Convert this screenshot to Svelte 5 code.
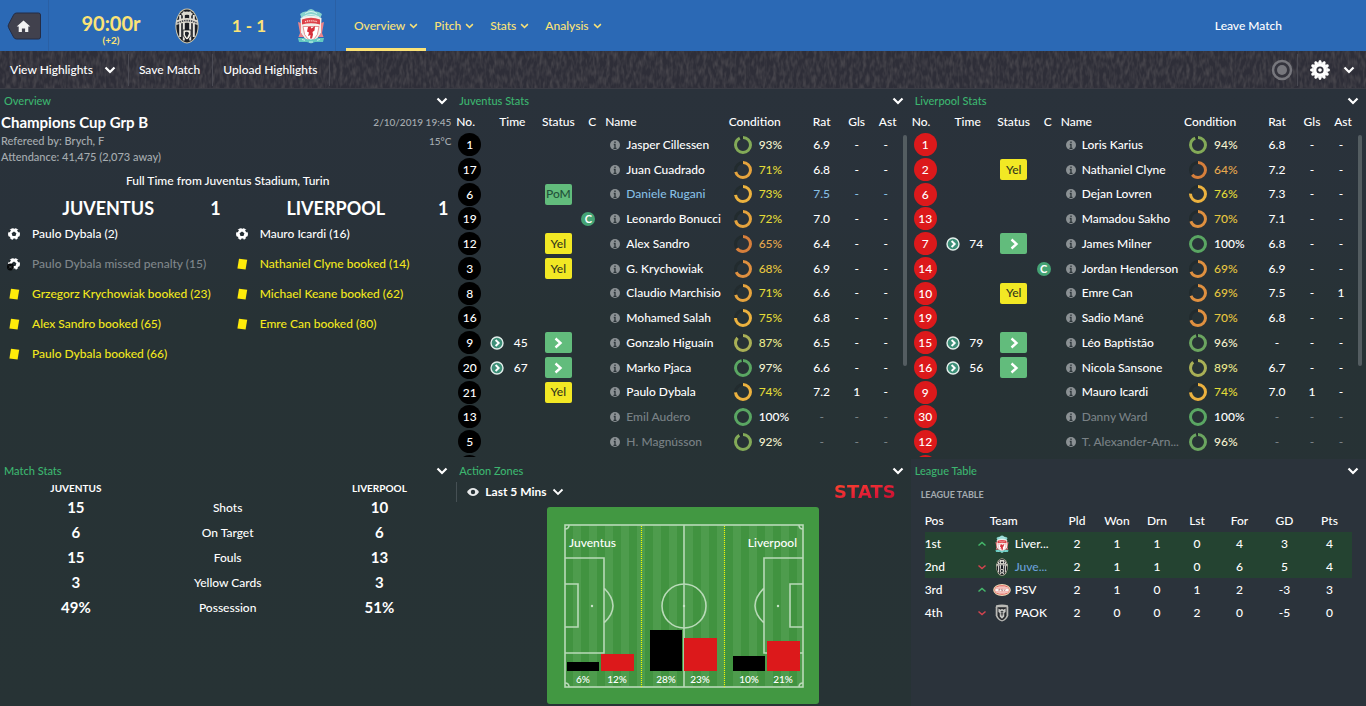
<script>
  const P = (no, name, cond, rat, extra = {}) => ({ no, name, cond, rat, gls: '-', ast: '-', ...extra });

  const juventus = [
    P(1, 'Jasper Cillessen', 93, '6.9'),
    P(17, 'Juan Cuadrado', 71, '6.8'),
    P(6, 'Daniele Rugani', 73, '7.5', { status: 'PoM', best: true }),
    P(19, 'Leonardo Bonucci', 72, '7.0', { captain: true }),
    P(12, 'Alex Sandro', 65, '6.4', { status: 'Yel' }),
    P(3, 'G. Krychowiak', 68, '6.9', { status: 'Yel' }),
    P(8, 'Claudio Marchisio', 71, '6.6'),
    P(16, 'Mohamed Salah', 75, '6.8'),
    P(9, 'Gonzalo Higuaín', 87, '6.5', { time: 45, status: 'sub' }),
    P(20, 'Marko Pjaca', 97, '6.6', { time: 67, status: 'sub' }),
    P(21, 'Paulo Dybala', 74, '7.2', { status: 'Yel', gls: '1' }),
    P(13, 'Emil Audero', 100, '-', { unused: true }),
    P(5, 'H. Magnússon', 92, '-', { unused: true })
  ];

  const liverpool = [
    P(1, 'Loris Karius', 94, '6.8'),
    P(2, 'Nathaniel Clyne', 64, '7.2', { status: 'Yel' }),
    P(6, 'Dejan Lovren', 76, '7.3'),
    P(13, 'Mamadou Sakho', 70, '7.1'),
    P(7, 'James Milner', 100, '6.8', { time: 74, status: 'sub' }),
    P(14, 'Jordan Henderson', 69, '6.9', { captain: true }),
    P(10, 'Emre Can', 69, '7.5', { status: 'Yel', ast: '1' }),
    P(19, 'Sadio Mané', 70, '6.8'),
    P(15, 'Léo Baptistão', 96, '-', { time: 79, status: 'sub' }),
    P(16, 'Nicola Sansone', 89, '6.7', { time: 56, status: 'sub' }),
    P(9, 'Mauro Icardi', 74, '7.0', { gls: '1' }),
    P(30, 'Danny Ward', 100, '-', { unused: true }),
    P(12, 'T. Alexander-Arn...', 96, '-', { unused: true })
  ];

  const sides = [
    {
      name: 'JUVENTUS', score: 1,
      events: [
        ['goal', 'Paulo Dybala (2)'],
        ['miss', 'Paulo Dybala missed penalty (15)'],
        ['card', 'Grzegorz Krychowiak booked (23)'],
        ['card', 'Alex Sandro booked (65)'],
        ['card', 'Paulo Dybala booked (66)']
      ]
    },
    {
      name: 'LIVERPOOL', score: 1,
      events: [
        ['goal', 'Mauro Icardi (16)'],
        ['card', 'Nathaniel Clyne booked (14)'],
        ['card', 'Michael Keane booked (62)'],
        ['card', 'Emre Can booked (80)']
      ]
    }
  ];

  const matchStats = [
    ['15', 'Shots', '10'],
    ['6', 'On Target', '6'],
    ['15', 'Fouls', '13'],
    ['3', 'Yellow Cards', '3'],
    ['49%', 'Possession', '51%']
  ];

  const zones = [
    { x: 20, home: 6, away: 12 },
    { x: 103, home: 28, away: 23 },
    { x: 186, home: 10, away: 21 }
  ];

  const league = [
    { pos: '1st', up: true, crest: 'liv', team: 'Liver...', n: [2, 1, 1, 0, 4, 3, 4], q: true },
    { pos: '2nd', up: false, crest: 'juv', team: 'Juve...', n: [2, 1, 1, 0, 6, 5, 4], q: true, own: true },
    { pos: '3rd', up: true, crest: 'psv', team: 'PSV', n: [2, 1, 0, 1, 2, -3, 3] },
    { pos: '4th', up: false, crest: 'paok', team: 'PAOK', n: [2, 0, 0, 2, 0, -5, 0] }
  ];

  const barHeight = (v) => Math.round(v * 1.45);

  function ringColour(c) {
    if (c >= 97) return '#5aa663';
    if (c >= 96) return '#6ba560';
    if (c >= 90) return '#83aa58';
    if (c >= 85) return '#a9b056';
    if (c >= 73) return '#ecb23f';
    if (c >= 71) return '#e5a33e';
    if (c >= 68) return '#df9040';
    return '#d67f3c';
  }
  function textColour(c) {
    if (c >= 100) return '#ffffff';
    if (c >= 90) return '#f5f3cf';
    if (c >= 85) return '#eae98c';
    if (c >= 71) return '#e2db38';
    if (c >= 68) return '#e6c63f';
    return '#e5a84e';
  }
</script>

{#snippet caret(cls = '')}
  <svg class="caret {cls}" viewBox="0 0 12 8" aria-hidden="true"><path d="M1.5 1.5 6 6l4.5-4.5" /></svg>
{/snippet}

{#snippet heading(text)}
  <header class="panel-head">
    <h2>{text}</h2>
    <button aria-label="Panel options">{@render caret()}</button>
  </header>
{/snippet}

{#snippet crest(kind)}
  {#if kind === 'juv'}
    <svg class="crest" viewBox="0 0 26 36" aria-hidden="true">
      <ellipse cx="13" cy="18" rx="11.6" ry="17.4" fill="#cfc8ae" />
      <ellipse cx="13" cy="18" rx="10.6" ry="16.4" fill="#1b1d23" />
      <path d="M6.200 7V29M9.800 3.500V32.500M16.200 3.500V32.500M19.800 7V29" stroke="#e6e4de" stroke-width="2" />
      <path d="M2.200 12.500Q13 7.600 23.800 12.500V17Q13 12.400 2.200 17z" fill="#dedad0" />
      <path d="M3.500 14.900Q13 10.200 22.500 14.900" fill="none" stroke="#4a4c53" stroke-width="1.700" stroke-dasharray="1.500 .8" />
      <path d="M7 5.800Q13 1.400 19 5.800L17 8Q13 5.500 9 8z" fill="#dcd9d0" />
      <path d="M9 22h8v5q-1 3-4 5-3-2-4-5z" fill="#f1eee4" stroke="#15171c" stroke-width=".8" />
      <path d="M11 24.200c3-1.300 5 .6 3.500 2.500L13 30l-2-3z" fill="#20242b" />
    </svg>
  {:else if kind === 'liv'}
    <svg class="crest" viewBox="0 0 28 36" aria-hidden="true">
      <path d="M3 6q3-3 6.500-2.500Q14-1.500 18.500 3.500 22 3 25 6l-2 5H5z" fill="#86d2cd" />
      <path d="M8 5.500q6-4 12 0M6 9q8-5 16 0" fill="none" stroke="#d9f2ef" stroke-width="1" />
      <path d="M3.500 10Q14 5.500 24.500 10L24 25q-3 6-10 10Q7 31 4 25z" fill="#f3f0eb" />
      <path d="M5 11.500Q14 8 23 11.500v5Q14 14 5 16.500z" fill="#dd424a" />
      <path d="M8 13.600q6-1.600 12 0" fill="none" stroke="#ffd7d1" stroke-width="1.300" stroke-dasharray="1.200 .7" />
      <path d="M6 18.500h16l-1.600 8Q18 31 14 33q-4-2-6.400-6.500z" fill="#fff" stroke="#df7b7d" stroke-width=".8" />
      <path d="M11 19l2.500-.5 1 2L18 18l-.5 4.500-2 1.500.5 2.500-1 4h-2l.5-3.500-2.500 1 1-3.500-2-1z" fill="#d62f3a" />
      <path d="M1 14l3 1v10l3 4H1.500L3 25zM27 14l-3 1v10l-3 4h5.500L25 25z" fill="#ec858a" />
      <path d="M1 30h6q6 3 14 0h6l-1 4h-8l-4 1.500L10 34H2z" fill="#63c9c0" />
      <path d="M5 31.500l3 .8M23 31.500l-3 .8M12 34h4" stroke="#d9f5ef" stroke-width=".9" />
    </svg>
  {:else if kind === 'psv'}
    <svg class="crest" viewBox="0 0 20 14" aria-hidden="true">
      <ellipse cx="10" cy="7" rx="9.800" ry="6.800" fill="#ecd9b4" />
      <ellipse cx="10" cy="7" rx="8.500" ry="5.500" fill="#e2605a" />
      <path d="M3.500 4.200h13M3.500 9.800h13M6 2.800h8M6 11.200h8" stroke="#f9ebe6" stroke-width=".8" />
      <path d="M2.500 5.200h15v3.600h-15z" fill="#fbf6f2" />
      <path d="M6.500 7.900V6.200h1.300v.8H6.500M10.800 6.200H9.300v.8h1.500v.8H9.300M12 6l.9 1.900.9-1.900" fill="none" stroke="#a65a5a" stroke-width=".6" />
    </svg>
  {:else}
    <svg class="crest" viewBox="0 0 16 20" aria-hidden="true">
      <path d="M1.500 1.500Q8-.5 14.500 1.500l.5 2v9q-1 5-7 7-6-2-7-7v-9z" fill="#b9b9b5" />
      <path d="M3 3.500h10v9q-1 4-5 5.500-4-1.500-5-5.500z" fill="#26282c" />
      <path d="M4 5l2.500 1.500L8 5.200l1.500 1.300L12 5v4l-1.500 1v4L8 16.500 5.500 14v-4L4 9z" fill="#c9c9c6" />
      <path d="M6.500 8.500h3M8 7.500v6M6.500 11h3" stroke="#26282c" stroke-width=".9" />
    </svg>
  {/if}
{/snippet}

{#snippet squad(title, team, players)}
  <section class="panel">
    {@render heading(title)}
    <div class="scroller">
      <table class="squad {team}">
        <colgroup>
          <col class="w-no" /><col class="w-time" /><col class="w-status" /><col class="w-c" /><col />
          <col class="w-cond" /><col class="w-rat" /><col class="w-gls" /><col class="w-ast" />
        </colgroup>
        <thead>
          <tr>
            <th class="left">No.</th><th>Time</th><th>Status</th><th>C</th>
            <th class="left">Name</th><th class="left">Condition</th><th>Rat</th><th>Gls</th><th>Ast</th>
          </tr>
        </thead>
        <tbody>
          {#each players as p}
            <tr class:best={p.best} class:unused={p.unused}>
              <td class="left"><span class="shirt">{p.no}</span></td>
              <td>
                {#if p.time}
                  <span class="time">
                    <svg viewBox="0 0 14 14" aria-hidden="true"><circle cx="7" cy="7" r="6" fill="#3d8f78" stroke="#e3efeb" stroke-width="1.400" /><path d="M5.600 4 8.700 7l-3.100 3" fill="none" stroke="#fff" stroke-width="1.900" /></svg>
                    <span>{p.time}</span>
                  </span>
                {/if}
              </td>
              <td>
                {#if p.status === 'sub'}
                  <span class="tag green"><svg viewBox="0 0 10 12" aria-label="Substituted"><path d="M2.500 1.500 7.500 6l-5 4.500" fill="none" stroke="#fff" stroke-width="2.400" /></svg></span>
                {:else if p.status}
                  <span class="tag" class:green={p.status === 'PoM'} class:yellow={p.status === 'Yel'}>{p.status}</span>
                {/if}
              </td>
              <td class="left">{#if p.captain}<span class="captain">C</span>{/if}</td>
              <td class="left">
                <span class="name">
                  <svg viewBox="0 0 10 10" aria-hidden="true"><circle cx="5" cy="5" r="5" fill="#8b9194" /><path d="M5 1.500v1.600M3.800 4.500H5v4M3.500 8.300h3" fill="none" stroke="#2b3438" stroke-width="1.300" /></svg>
                  <span>{p.name}</span>
                </span>
              </td>
              <td class="left">
                <span class="cond" style:color={textColour(p.cond)}>
                  <svg viewBox="0 0 20 20" aria-hidden="true">
                    <circle cx="10" cy="10" r="7.500" stroke="#222b2e" />
                    <circle cx="10" cy="10" r="7.500" pathLength="100" stroke={ringColour(p.cond)} stroke-dasharray="{p.cond} 100" transform="rotate(-90 10 10)" />
                  </svg>
                  {p.cond}%
                </span>
              </td>
              <td class="num">{p.rat}</td><td class="num">{p.gls}</td><td class="num">{p.ast}</td>
            </tr>
          {/each}
          <tr><td class="left"><span class="shirt"></span></td><td colspan="8"></td></tr>
        </tbody>
      </table>
      <div class="track"><div class="thumb"></div></div>
    </div>
  </section>
{/snippet}

<div class="app">
  <header class="top">
    <button class="home" aria-label="Home">
      <svg viewBox="0 0 34 28" aria-hidden="true">
        <path d="M9 1h22q2 0 2 2v22q0 2-2 2H9q-2 0-3-2L1 15.500q-.7-1.500 0-3L6 3q1-2 3-2z" fill="#41414d" stroke="#242c45" />
        <path d="M16 8.500 22.800 14.600h-2V20h-3.200v-3.600h-3.200V20h-3.200v-5.400h-2z" fill="#f2f2f3" />
      </svg>
    </button>
    <div class="scoreline">
      <div class="clock"><strong>90:00r</strong><span>(+2)</span></div>
      {@render crest('juv')}
      <strong>1 - 1</strong>
      {@render crest('liv')}
    </div>
    <nav>
      {#each ['Overview', 'Pitch', 'Stats', 'Analysis'] as item, i}
        <button class:active={i === 0}>{item}{@render caret('small')}</button>
      {/each}
    </nav>
    <button class="leave">Leave Match</button>
  </header>

  <div class="toolbar">
    <svg class="crowd" aria-hidden="true">
      <filter id="crowd" x="0" y="0" width="100%" height="100%" color-interpolation-filters="sRGB">
        <feTurbulence type="fractalNoise" baseFrequency=".3 .12" numOctaves="2" seed="4" />
        <feColorMatrix values="0 0 0 0 .32  0 0 0 0 .31  0 0 0 0 .33  1.600 0 0 0 -.6" />
      </filter>
      <rect width="100%" height="100%" filter="url(#crowd)" />
    </svg>
    <button class="wide">View Highlights {@render caret()}</button>
    <button>Save Match</button>
    <button>Upload Highlights</button>
    <span class="spacer"></span>
    <button class="record" aria-label="Record">
      <svg viewBox="0 0 22 22" aria-hidden="true"><circle cx="11" cy="11" r="9" fill="#34343d" stroke="#77777d" stroke-width="2.500" /><circle cx="11" cy="11" r="5" fill="#77777d" /></svg>
    </button>
    <button class="gear" aria-label="Settings">
      <svg viewBox="-11 -11 22 22" aria-hidden="true">
        {#each Array(12) as _, i}<path d="M-2.200-6.500-.9-9.800H.9L2.200-6.500z" fill="#fff" transform="rotate({i * 30})" />{/each}
        <circle r="7" fill="#fff" /><circle r="2.700" fill="none" stroke="#33333d" stroke-width="1.800" />
      </svg>
      {@render caret()}
    </button>
  </div>

  <main>
    <section class="panel">
      {@render heading('Overview')}
      <div class="match">
        <h1>Champions Cup Grp B</h1><span>2/10/2019 19:45</span>
        <span>Refereed by: Brych, F</span><span>15°C</span>
        <span>Attendance: 41,475 (2,073 away)</span>
      </div>
      <p class="venue">Full Time from Juventus Stadium, Turin</p>
      <div class="sides">
        {#each sides as side}
          <div>
            <div class="side-head"><span>{side.name}</span><b>{side.score}</b></div>
            <ul>
              {#each side.events as [kind, text]}
                <li class={kind}>
                  <svg viewBox="0 0 14 14" aria-hidden="true">
                    {#if kind === 'card'}
                      <path d="M4 1.800 12.200 2.800 10.600 12.600 2.400 11.400z" fill="#ffeb0a" />
                    {:else}
                      <circle cx="7" cy="7" r="6" fill="#fff" />
                      <path d="M7 4.600 9.400 6.300 8.500 9H5.500L4.600 6.300zM1.600 2.600l2.400.6L2.800 5.200 1 5.200zM12.400 2.600l-2.400.6 1.200 2 1.800 0zM5.700 13.200l.8-1.600h1.700l.8 1.600zM5.800.8h2.600L7.200 2zM1 9.500l2 .2.6 2.300-1.300-.5zM13 9.500l-2 .2-.6 2.300 1.300-.5z" fill="#263035" />
                      {#if kind === 'miss'}<circle cx="3.400" cy="10" r="3.400" fill="#050708" /><path d="M2 8.600l2.800 2.800m0-2.800L2 11.400" stroke="#4b5052" stroke-width=".8" />{/if}
                    {/if}
                  </svg>
                  <span>{text}</span>
                </li>
              {/each}
            </ul>
          </div>
        {/each}
      </div>
    </section>

    {@render squad('Juventus Stats', 'black', juventus)}
    {@render squad('Liverpool Stats', 'red', liverpool)}

    <section class="panel">
      {@render heading('Match Stats')}
      <table class="compare">
        <thead><tr><th>JUVENTUS</th><td></td><th>LIVERPOOL</th></tr></thead>
        <tbody>
          {#each matchStats as [home, label, away]}
            <tr><td><b>{home}</b></td><th>{label}</th><td><b>{away}</b></td></tr>
          {/each}
        </tbody>
      </table>
    </section>

    <section class="panel">
      {@render heading('Action Zones')}
      <div class="zone-bar">
        <label class="period">
          <svg viewBox="0 0 14 10" aria-hidden="true"><path d="M1 5q2.500-4 6-4t6 4q-2.500 4-6 4T1 5z" fill="#e8eaeb" /><circle cx="7" cy="5" r="2.200" fill="#273236" /></svg>
          <select aria-label="Period"><option>Last 5 Mins</option></select>
          {@render caret()}
        </label>
        <span class="stats-logo">STATS</span>
      </div>
      <svg class="pitch" viewBox="0 0 272 197" role="img" aria-label="Action zones">
        <defs>
          <pattern id="grass" x="18" width="16" height="20" patternUnits="userSpaceOnUse"><rect width="8" height="20" fill="#419340" /><rect x="8" width="8" height="20" fill="#4e9c4d" /></pattern>
        </defs>
        <rect width="272" height="197" rx="3" fill="#429842" />
        <rect x="18" y="18" width="238" height="162" fill="url(#grass)" />
        <g fill="none" stroke="#b9dab8" stroke-width="1.600">
          <rect x="18" y="18" width="238" height="162" />
          <path d="M137 18v162M18 51h39v95H18M18 77h13v43H18M256 51h-39v95h39M256 77h-13v43h13M57 81q18 18 0 35M217 81q-18 18 0 35" />
          <path d="M22 18q0 4-4 4M252 18q0 4 4 4M22 180q0-4-4-4M252 180q0-4 4-4" />
          <circle cx="137" cy="99" r="22" />
        </g>
        <g fill="#c9e2c8"><circle cx="45" cy="99" r="1.200" /><circle cx="137" cy="99" r="1.200" /><circle cx="231" cy="99" r="1.200" /></g>
        <path d="M94.500 19v161M177.500 19v161" stroke="#f4f800" stroke-width="1.100" stroke-dasharray="1 1" />
        <text x="22" y="40" class="club">Juventus</text>
        <text x="250" y="40" class="club" text-anchor="end">Liverpool</text>
        {#each zones as z}
          <rect x={z.x} y={164 - barHeight(z.home)} width="32" height={barHeight(z.home)} fill="#000" />
          <rect x={z.x + 34} y={164 - barHeight(z.away)} width="33" height={barHeight(z.away)} fill="#dc191b" />
          <text x={z.x + 16} y="176" text-anchor="middle">{z.home}%</text>
          <text x={z.x + 50} y="176" text-anchor="middle">{z.away}%</text>
        {/each}
      </svg>
    </section>

    <section class="panel league-panel">
      {@render heading('League Table')}
      <h3>LEAGUE TABLE</h3>
      <table class="league">
        <colgroup><col class="l-pos" /><col class="l-move" /><col /><col span="4" class="l-num" /><col span="3" class="l-wide" /></colgroup>
        <thead>
          <tr><th class="left">Pos</th><th></th><th class="left">Team</th><th>Pld</th><th>Won</th><th>Drn</th><th>Lst</th><th>For</th><th>GD</th><th>Pts</th></tr>
        </thead>
        <tbody>
          {#each league as row}
            <tr class:q={row.q}>
              <td class="left">{row.pos}</td>
              <td><svg class="move" viewBox="0 0 10 8" aria-hidden="true"><path d={row.up ? 'M1.500 5.500 5 2.500l3.500 3' : 'M1.500 2.500 5 5.500l3.500-3'} stroke={row.up ? '#45b86b' : '#d4444f'} /></svg></td>
              <td class="left"><span class="team" class:own={row.own}>{@render crest(row.crest)}<span>{row.team}</span></span></td>
              {#each row.n as n}<td>{n}</td>{/each}
            </tr>
          {/each}
        </tbody>
      </table>
    </section>
  </main>
</div>

<style>
  :global(body) { margin: 0; background: #273235; }
  .app {
    font-family: Lato, 'Open Sans', sans-serif;
    font-size: 12px;
    font-weight: 500;
    line-height: 16px;
    color: #fff;
    min-height: 100vh;
    display: flex;
    flex-direction: column;
    background: linear-gradient(#2a323b 89px, #29323a 220px, #273235 320px, #273335 100%);
  }
  button { font: inherit; color: inherit; background: none; border: 0; padding: 0; cursor: pointer; }
  h1, h2, h3, p, ul { margin: 0; padding: 0; font-weight: 500; }
  ul { list-style: none; }
  svg { display: block; flex: none; }
  .caret { width: 12px; height: 8px; fill: none; stroke: currentColor; stroke-width: 2.200; }
  .caret.small { width: 9px; height: 6px; stroke-width: 2; }

  .top { display: flex; height: 51px; background: #2b69b5; color: #fbe377; }
  .home { width: 49px; display: flex; align-items: center; padding-left: 7px; border-right: 1px solid #2a60a5; box-sizing: border-box; }
  .home svg { width: 35px; height: 28px; }
  .scoreline { display: flex; align-items: center; width: 286px; border-right: 1px solid #2a60a5; font-size: 17px; }
  .clock { display: flex; flex-direction: column; align-items: center; width: 124px; font-size: 20px; line-height: 22px; padding-top: 6px; }
  .clock span { font-size: 10px; line-height: 12px; font-weight: 700; }
  .scoreline .crest { width: 28px; height: 36px; }
  .scoreline > strong { width: 96px; text-align: center; }
  nav { display: flex; margin-left: 10px; flex: 1; }
  nav button { display: flex; align-items: center; gap: 4px; padding: 3px 8px 0; border-bottom: 3px solid transparent; }
  nav .active { border-color: #fbe377; }
  .leave { color: #fff; margin-right: 84px; }

  .toolbar { position: relative; display: flex; align-items: center; height: 37px; background: #2e2e38; border-bottom: 1px solid #3b3c45; }
  .crowd { position: absolute; inset: 0; width: 100%; height: 100%; }
  .toolbar button { position: relative; height: 32px; padding: 0 12px 0 10px; border-right: 1px solid #4a4a53; display: flex; align-items: center; }
  .toolbar .wide { gap: 11px; }
  .spacer { flex: 1; }
  .toolbar .record { padding: 0 4px; }
  .record svg { width: 22px; height: 22px; }
  .toolbar .gear { gap: 12px; border: 0; padding: 0 11px; }
  .gear svg:first-child { width: 22px; height: 22px; }

  main { display: grid; grid-template-columns: repeat(3, minmax(0, 1fr)); grid-template-rows: 370px auto; flex: 1; }
  .panel { min-width: 0; padding-bottom: 3px; overflow: hidden; }
  .panel-head { display: flex; justify-content: space-between; align-items: center; height: 22px; padding: 1px 7px 0 4px; box-sizing: border-box; }
  .panel-head h2 { font-size: 11px; color: #3cb56f; }

  .match { display: grid; grid-template-columns: 1fr auto; padding: 0 4px 0 1px; font-size: 11px; color: #a6acb0; align-items: center; }
  .match h1 { font-size: 15px; line-height: 22px; font-weight: 700; color: #fff; }
  .match span:nth-child(even) { text-align: right; font-size: 10px; }
  .venue { text-align: center; line-height: 32px; }
  .sides { display: grid; grid-template-columns: 1fr 1fr; }
  .side-head { display: flex; font-size: 18px; line-height: 22px; padding-right: 7px; }
  .side-head span { flex: 1; text-align: center; font-weight: 700; padding-left: 6px; }
  li { display: flex; align-items: center; gap: 11px; height: 30px; padding-left: 7px; white-space: nowrap; }
  li svg { width: 14px; height: 14px; }
  .card { color: #f2e71d; }
  .miss { color: #7f868a; }

  table { border-collapse: collapse; table-layout: fixed; width: 100%; }
  th, td { padding: 0; text-align: center; font-weight: 500; white-space: nowrap; }
  .left { text-align: left; }

  .scroller { display: flex; height: 346px; overflow: hidden; }
  .squad { flex: 1; min-width: 0; align-self: flex-start; }
  .squad th { height: 21px; }
  .squad th:first-child { padding-left: 1px; }
  .squad th:last-child { padding-left: 4px; }
  .squad tbody td { height: 25px; }
  .squad tbody tr:nth-child(4n + 3) td { height: 24px; }
  .w-no { width: 32px; } .w-time { width: 50px; } .w-status { width: 42px; } .w-c { width: 26px; }
  .w-cond { width: 71px; } .w-rat { width: 44px; } .w-gls { width: 26px; } .w-ast { width: 32px; }
  .shirt { display: block; width: 23px; height: 23px; line-height: 23px; border-radius: 50%; text-align: center; margin-left: 3px; background: #000; }
  .red .shirt { background: #dc191b; }
  .time { display: grid; grid-template-columns: 14px 1fr; align-items: center; padding-left: 3px; }
  .time svg { width: 14px; height: 14px; }
  .tag { display: flex; align-items: center; justify-content: center; width: 27px; height: 21px; margin: auto; border-radius: 2px; color: #33381c; }
  .tag svg { width: 10px; height: 12px; }
  .green { background: #62bc7c; color: #23523a; }
  .yellow { background: #f2e824; }
  .captain { display: block; width: 14px; height: 14px; line-height: 14px; margin-left: 2px; border-radius: 50%; background: #45a374; text-align: center; font-size: 11px; font-weight: 700; }
  .name, .cond, .team { display: flex; align-items: center; }
  .name { gap: 6px; padding-left: 5px; }
  .name svg { width: 10px; height: 10px; }
  .cond { gap: 6px; padding-left: 4px; }
  .cond svg { width: 20px; height: 20px; fill: none; stroke-width: 3; }
  .best .name span, .best .num { color: #86bfe4; }
  .unused .name span, .unused .num { color: #798185; }
  .track { width: 9px; padding-top: 24px; }
  .thumb { width: 4px; height: 231px; margin-left: 1px; border-radius: 2px; background: #545d61; }

  .compare thead { font-size: 10px; line-height: 12px; }
  .compare thead th { font-weight: 700; }
  .compare thead tr { height: 14px; }
  .compare tbody tr { height: 25px; }
  .compare b { font-size: 15px; }

  .zone-bar { display: flex; justify-content: space-between; align-items: center; padding: 0 15px 0 1px; height: 20px; margin: 1px 0 5px; }
  .period { display: flex; align-items: center; border-left: 1px solid #465054; padding-left: 9px; height: 20px; gap: 5px; }
  .period > svg:first-child { width: 14px; height: 10px; }
  .period .caret { stroke-width: 1.800; }
  select { appearance: none; background: none; border: 0; padding: 0; color: #fff; font: 700 12px/16px Lato, sans-serif; }
  .stats-logo { font: 700 18px/20px 'DejaVu Sans', sans-serif; color: transparent; background: linear-gradient(165deg, #ff4a2c, #dd1837 65%, #b4142a); background-clip: text; }
  .pitch { width: 60%; max-width: 272px; margin: 0 auto; }
  .pitch text { fill: #fff; font-size: 10px; }
  .pitch .club { font-size: 12px; }

  .league-panel { background: #2b333b; }
  h3 { font-size: 9px; line-height: 28px; padding-left: 10px; color: #a5abb0; font-weight: 700; }
  .league { width: auto; min-width: calc(100% - 28px); margin: 0 14px; }
  .league tr { height: 23px; }
  .l-pos { width: 49px; } .l-move { width: 16px; } .l-num { width: 40px; } .l-wide { width: 45px; }
  .league .q { background: #244331; }
  .move { width: 10px; height: 8px; margin: auto; fill: none; stroke-width: 1.500; }
  .team { gap: 4px; padding-left: 3px; }
  .team .crest { width: 18px; height: 18px; }
  .team.own { color: #6ba0da; }
</style>
